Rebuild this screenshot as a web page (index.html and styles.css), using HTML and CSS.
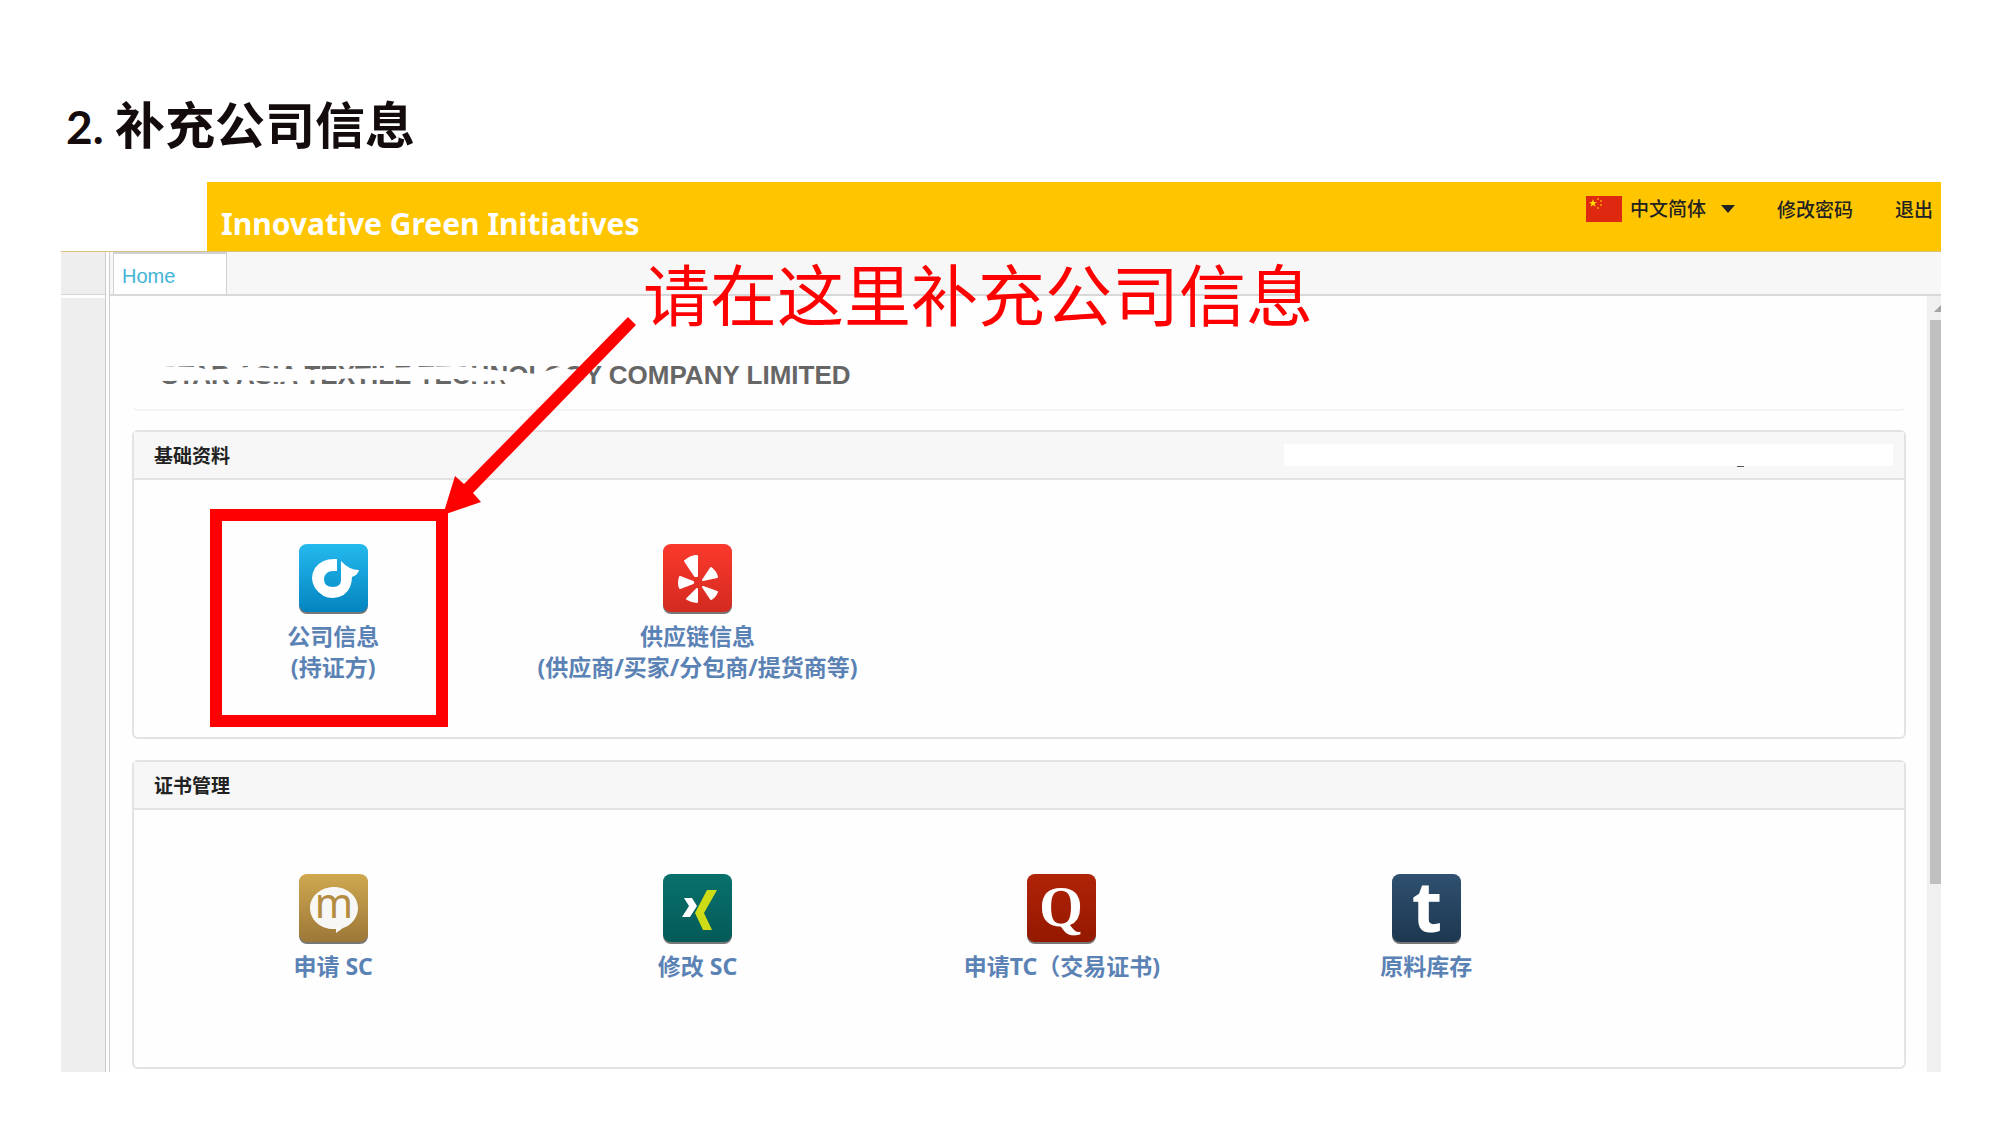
FILE: index.html
```html
<!DOCTYPE html>
<html lang="zh-CN">
<head>
    <meta charset="UTF-8">
    <meta name="viewport" content="width=device-width, initial-scale=1.0">
    <title>补充公司信息</title>
    <link rel="stylesheet" href="styles.css">
</head>
<body>
    <h1 class="step-title"><span class="step-number">2.</span> 补充公司信息</h1>

    <div class="app">
        <header class="header">
            <div class="logo"></div>
            <div class="brand">Innovative Green Initiatives</div>
            <nav class="menu">
                <label class="language">
                    <svg class="flag" viewBox="0 0 36 26" aria-hidden="true">
                        <rect width="36" height="26" fill="#de2910"/>
                        <path d="M7 3l1 3h3l-2.400 1.800 1 3L7 9l-2.600 1.800 1-3L3 6h3z" fill="#ffde00"/>
                        <g fill="#f5a300">
                            <circle cx="12" cy="3" r="1"/>
                            <circle cx="15" cy="5" r="1"/>
                            <circle cx="15" cy="9" r="1"/>
                            <circle cx="12" cy="12" r="1"/>
                        </g>
                    </svg>
                    <select class="language-select" aria-label="语言">
                        <option>中文简体</option>
                    </select>
                    <svg class="caret" viewBox="0 0 14 8" aria-hidden="true"><path d="M0 0h14L7 8z" fill="#222"/></svg>
                </label>
                <a href="#">修改密码</a>
                <a href="#">退出</a>
            </nav>
        </header>

        <div class="workspace">
            <aside class="sidebar">
                <div class="sidebar-head"></div>
                <div class="sidebar-body"></div>
            </aside>
            <div class="splitter"></div>

            <div class="main">
                <div class="tabs">
                    <a class="tab" href="#">Home</a>
                </div>
                <div class="scroll-area">
                    <main class="content">
                        <section class="company">
                            <h2>STAR ASIA TEXTILE TECHNOLOGY COMPANY LIMITED</h2>
                            <svg class="company-mask" viewBox="0 0 450 30" aria-hidden="true">
                                <path d="M0 8L40 9 50 12 90 9 150 12 220 10 300 8 345 13 380 16 400 9 425 14 425 30 350 30 345 22 320 24 300 21 210 22 200 20 120 24 80 22 0 23z" fill="#fefefe"/>
                            </svg>
                        </section>

                        <section class="panel">
                            <div class="panel-head">
                                <h3>基础资料</h3>
                                <div class="blank-strip"><i class="blank-mark"></i></div>
                            </div>
                            <div class="tiles">
                                <a class="tile" href="#">
                                    <svg class="icon" viewBox="0 0 69 69" aria-hidden="true">
                                        <defs><linearGradient id="blue" x2="0" y2="1"><stop stop-color="#24b9ee"/><stop offset="1" stop-color="#0484c0"/></linearGradient></defs>
                                        <rect y="1" width="69" height="69" rx="8" fill="#777"/>
                                        <rect width="69" height="68" rx="8" fill="url(#blue)"/>
                                        <path d="M38 15Q23 14 16 24Q10 34 16 44Q23 54 34 54Q47 53 51 43Q53 38 53 33Q59 31 60 26Q50 26 42 17V36Q42 43 34 43Q25 43 25 35Q26 27 34 27H38z" fill="#fff"/>
                                    </svg>
                                    <span>公司信息<br>(持证方)</span>
                                </a>
                                <a class="tile" href="#">
                                    <svg class="icon" viewBox="0 0 69 69" aria-hidden="true">
                                        <defs><linearGradient id="red" x2="0" y2="1"><stop stop-color="#fb392c"/><stop offset="1" stop-color="#d32a20"/></linearGradient></defs>
                                        <rect y="1" width="69" height="69" rx="8" fill="#777"/>
                                        <rect width="69" height="68" rx="8" fill="url(#red)"/>
                                        <g fill="#fff" stroke="#fff" stroke-width="2" stroke-linejoin="round">
                                            <path d="M22 17Q28 12 34 12V32H32z"/>
                                            <path d="M40 36L48 24Q53 28 54 33z"/>
                                            <path d="M40 43L54 48Q52 53 48 55z"/>
                                            <path d="M34 45V58Q29 58 24 55z"/>
                                            <path d="M17 33L30 38V39L17 44Q15 39 17 33z"/>
                                        </g>
                                    </svg>
                                    <span>供应链信息<br>(供应商/买家/分包商/提货商等)</span>
                                </a>
                            </div>
                        </section>

                        <section class="panel">
                            <div class="panel-head">
                                <h3>证书管理</h3>
                            </div>
                            <div class="tiles">
                                <a class="tile" href="#">
                                    <svg class="icon" viewBox="0 0 69 69" aria-hidden="true">
                                        <defs><linearGradient id="gold" x2="0" y2="1"><stop stop-color="#cfa850"/><stop offset="1" stop-color="#9c7738"/></linearGradient></defs>
                                        <rect y="1" width="69" height="69" rx="8" fill="#777"/>
                                        <rect width="69" height="68" rx="8" fill="url(#gold)"/>
                                        <path d="M35 13C48 13 59 22 59 34C59 43 53 51 44 54L37 59V55C22 56 11 46 11 34C11 22 22 13 35 13z" fill="#f7f7f5"/>
                                        <text class="icon-m" x="35" y="44" text-anchor="middle">m</text>
                                    </svg>
                                    <span>申请 SC</span>
                                </a>
                                <a class="tile" href="#">
                                    <svg class="icon" viewBox="0 0 69 69" aria-hidden="true">
                                        <defs><linearGradient id="teal" x2="0" y2="1"><stop stop-color="#08706c"/><stop offset="1" stop-color="#045b58"/></linearGradient></defs>
                                        <rect y="1" width="69" height="69" rx="8" fill="#777"/>
                                        <rect width="69" height="68" rx="8" fill="url(#teal)"/>
                                        <path d="M21 24H29L34 32 27 43H19L26 32z" fill="#fff"/>
                                        <path d="M44 16H54L41 39 49 56H40L32 39z" fill="#cddc16"/>
                                    </svg>
                                    <span>修改 SC</span>
                                </a>
                                <a class="tile" href="#">
                                    <svg class="icon" viewBox="0 0 69 69" aria-hidden="true">
                                        <defs><linearGradient id="crimson" x2="0" y2="1"><stop stop-color="#b02307"/><stop offset="1" stop-color="#941800"/></linearGradient></defs>
                                        <rect y="1" width="69" height="69" rx="8" fill="#777"/>
                                        <rect width="69" height="68" rx="8" fill="url(#crimson)"/>
                                        <text class="icon-q" x="34" y="52" text-anchor="middle">Q</text>
                                    </svg>
                                    <span>申请TC（交易证书)</span>
                                </a>
                                <a class="tile" href="#">
                                    <svg class="icon" viewBox="0 0 69 69" aria-hidden="true">
                                        <defs><linearGradient id="navy" x2="0" y2="1"><stop stop-color="#2f5070"/><stop offset="1" stop-color="#1d3850"/></linearGradient></defs>
                                        <rect y="1" width="69" height="69" rx="8" fill="#777"/>
                                        <rect width="69" height="68" rx="8" fill="url(#navy)"/>
                                        <text class="icon-t" x="35" y="58" text-anchor="middle">t</text>
                                    </svg>
                                    <span>原料库存</span>
                                </a>
                            </div>
                        </section>
                    </main>
                    <div class="scrollbar">
                        <svg class="scroll-up" viewBox="0 0 7 7" aria-hidden="true"><path d="M0 7L7 0V7z" fill="#a3a3a3"/></svg>
                        <div class="thumb"></div>
                    </div>
                </div>
            </div>
        </div>

        <!-- callout over the first tile -->
        <div class="highlight"></div>
        <svg class="arrow" viewBox="0 0 194 200" aria-hidden="true">
            <path d="M185 1L193 9 30 177 38 186 0 199 12 160 21 168z" fill="#f00"/>
        </svg>
        <p class="callout">请在这里补充公司信息</p>
    </div>
</body>
</html>
```

FILE: styles.css
```css
body {
    margin: 0;
    background-color: #fff;
    font-family: "Noto Sans", "Noto Sans CJK SC", sans-serif;
    color: #222;
}
h1, h2, h3, p {
    margin: 0;
}
a {
    text-decoration: none;
}
svg {
    display: block;
}
.step-title {
    padding: 86px 66px 24px;
    font-family: "Noto Sans CJK SC", sans-serif;
    font-size: 50px;
    line-height: 72px;
    color: #140c0c;
}
.step-number {
    font-family: Lato, sans-serif;
    font-size: 46px;
    line-height: 1;
}
.app {
    position: relative;
    margin: 0 59px 54px 61px;
    background-color: #fefefe;
}

/* header */
.header {
    display: flex;
    height: 69px;
    background-color: #ffc600;
    border-bottom: 1px solid #d9c27a;
}
.logo {
    width: 146px;
    background-color: #fff;
}
.brand {
    flex: 1;
    padding: 21px 0 0 14px;
    font-size: 30px;
    font-weight: bold;
    line-height: 42px;
    color: #fff;
}
.menu {
    display: flex;
    gap: 42px;
    align-items: center;
    height: 54px;
    padding-right: 8px;
    font-size: 19px;
    font-weight: 500;
}
.menu a {
    color: #222;
}
.language {
    display: flex;
    align-items: center;
}
.flag {
    width: 36px;
    height: 26px;
    margin-right: 8px;
}
.language-select {
    appearance: none;
    padding: 0;
    border: none;
    background: none;
    font: inherit;
    color: inherit;
}
.caret {
    width: 14px;
    height: 8px;
    margin-left: 14px;
}

/* workspace */
.workspace {
    display: flex;
}
.sidebar {
    display: flex;
    flex-direction: column;
    width: 44px;
    border-right: 1px solid #ccc;
}
.sidebar-head {
    height: 42px;
    background-color: #eee;
    border-bottom: 1px solid #d5d5d5;
}
.sidebar-body {
    flex: 1;
    margin-top: 3px;
    background-color: #eee;
}
.splitter {
    width: 3px;
    border-right: 1px solid #ccc;
}
.main {
    flex: 1;
}
.tabs {
    display: flex;
    height: 42px;
    padding-left: 3px;
    background-color: #f7f7f7;
    border-bottom: 2px solid #d8d8d8;
}
.tab {
    width: 104px;
    padding-left: 8px;
    border: 1px solid #d0d0d8;
    border-width: 2px 1px 0;
    background-color: #fff;
    font-family: "Liberation Sans", Arial, sans-serif;
    font-size: 20px;
    line-height: 44px;
    color: #42b4d6;
}
.scroll-area {
    display: flex;
}
.content {
    flex: 1;
    padding: 0 21px 3px 22px;
}
.company {
    position: relative;
    padding: 64px 29px 19px;
    margin-bottom: 19px;
    border-bottom: 2px solid #f3f3f3;
    border-radius: 6px;
}
.company h2 {
    font-family: "Liberation Sans", Arial, sans-serif;
    font-size: 26px;
    line-height: 30px;
    color: #666;
}
.company-mask {
    position: absolute;
    left: 26px;
    top: 62px;
    width: 450px;
    height: 30px;
}

/* panels */
.panel {
    margin-bottom: 21px;
    border: 2px solid #e3e3e3;
    border-radius: 6px;
}
.panel:last-child {
    margin-bottom: 0;
}
.panel-head {
    display: flex;
    align-items: center;
    justify-content: space-between;
    height: 46px;
    padding: 0 11px 0 20px;
    border-bottom: 2px solid #e3e3e3;
    background-color: #f7f7f7;
}
.panel-head h3 {
    font-size: 19px;
    font-weight: bold;
}
.blank-strip {
    position: relative;
    width: 35%;
    height: 22px;
    background-color: #fff;
}
.blank-mark {
    position: absolute;
    right: 149px;
    top: 22px;
    width: 7px;
    height: 1px;
    background-color: #555;
}
.tiles {
    display: grid;
    grid-template-columns: repeat(4, 21%);
    min-height: 193px;
    padding: 64px 18px 0 17px;
}
.tile {
    display: flex;
    flex-direction: column;
    align-items: center;
    gap: 8px;
    font-size: 23px;
    font-weight: bold;
    line-height: 31px;
    text-align: center;
    color: #5b82b5;
}
.icon {
    width: 69px;
    height: 69px;
    overflow: visible;
}
.icon-m {
    font-family: "Noto Sans", sans-serif;
    font-size: 41px;
    font-weight: normal;
    fill: #b48c40;
}
.icon-q {
    font-family: "Liberation Serif", serif;
    font-size: 56px;
    font-weight: bold;
    fill: #fff;
}
.icon-t {
    font-family: "Noto Sans", sans-serif;
    font-size: 70px;
    font-weight: bold;
    fill: #fff;
}

/* scrollbar */
.scrollbar {
    width: 14px;
    padding-top: 9px;
    box-sizing: border-box;
    background-color: #f0f0f0;
}
.scroll-up {
    width: 7px;
    height: 7px;
    margin: 0 0 8px 7px;
}
.thumb {
    height: 564px;
    margin-left: 3px;
    background-color: #c0c0c0;
}

/* callout */
.highlight {
    position: absolute;
    left: 149px;
    top: 327px;
    width: 214px;
    height: 194px;
    border: 12px solid #f00;
}
.arrow {
    position: absolute;
    left: 382px;
    top: 134px;
    width: 194px;
    height: 200px;
}
.callout {
    position: absolute;
    left: 582px;
    top: 62px;
    font-family: "Noto Sans CJK SC", sans-serif;
    font-size: 67px;
    line-height: 96px;
    white-space: nowrap;
    color: #f00;
}
```
